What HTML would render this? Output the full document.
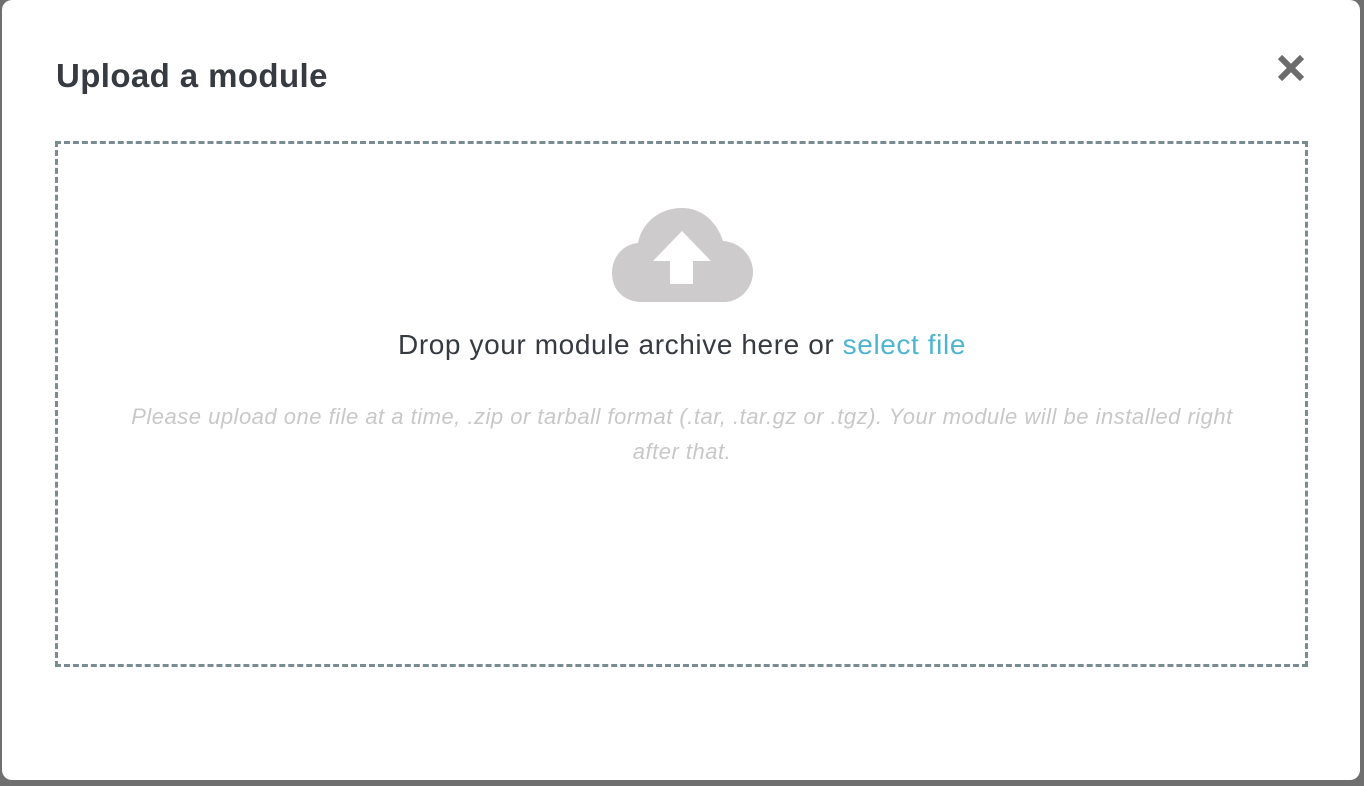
<!DOCTYPE html>
<html><head><style>
html,body{margin:0;padding:0;width:1364px;height:786px;overflow:hidden;background:#6f6f6f;font-family:"Liberation Sans",sans-serif;}
.modal{position:absolute;left:2px;top:0;width:1358px;height:780px;background:#fff;border-radius:10px;}
h1{position:absolute;left:56px;top:57px;margin:0;font-size:33px;font-weight:bold;color:#363a41;letter-spacing:0.4px;}
.drop{position:absolute;left:55px;top:141px;width:1247px;height:520px;border:3px dashed #7a8c93;}
.t1{position:absolute;left:0;width:1364px;top:329px;text-align:center;font-size:28px;letter-spacing:0.6px;color:#363a41;}
.t1 span{color:#4eb5d1}
.t2{position:absolute;left:110px;width:1144px;top:399px;text-align:center;font-size:22px;letter-spacing:0.5px;line-height:35px;color:#c8c8c8;font-style:italic;}
</style></head><body>
<div class="modal"></div>
<h1>Upload a module</h1>
<svg style="position:absolute;left:1276px;top:54px" width="30" height="28" viewBox="0 0 30 28"><path d="M4 3 L26 25 M26 3 L4 25" stroke="#6c6c6c" stroke-width="6"/></svg>
<div class="drop"></div>
<svg style="position:absolute;left:612px;top:208px" width="141" height="94" viewBox="0 0 141 94">
<path d="M30 94 C12 94 0 82 0 65 C0 48 12 36 26 35 C30 14 48 0 70 0 C90 0 105 14 111 33 C128 34 141 48 141 64 C141 80 128 94 112 94 Z" fill="#cdcbcc"/>
<path d="M70 23 L99 53 L81 53 L81 76 L58 76 L58 53 L41 53 Z" fill="#fff"/>
</svg>
<div class="t1">Drop your module archive here or <span>select file</span></div>
<div class="t2">Please upload one file at a time, .zip or tarball format (.tar, .tar.gz or .tgz). Your module will be installed right after that.</div>
</body></html>
